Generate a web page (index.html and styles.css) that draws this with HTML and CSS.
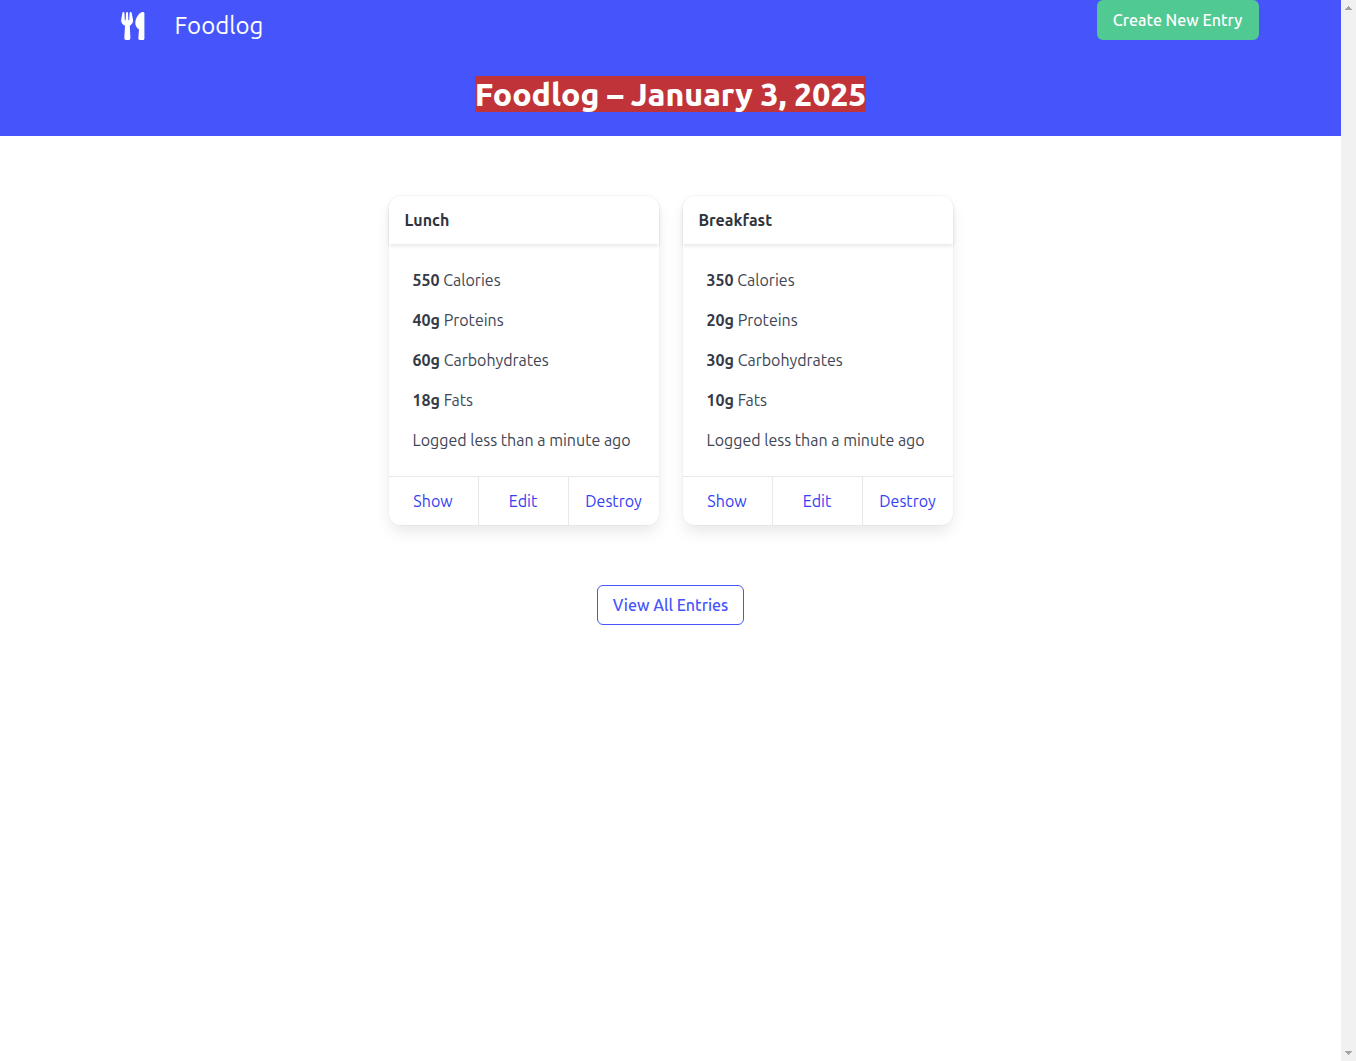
FILE: index.html
```html
<!DOCTYPE html>
<html lang="en">
<head>
<meta charset="utf-8">
<title>Foodlog</title>
<meta name="viewport" content="width=device-width, initial-scale=1">
<link rel="stylesheet" href="styles.css">
</head>
<body>
<div class="page">
  <header class="hero">
    <nav class="navbar" aria-label="Main">
      <a class="brand" href="#">
        <svg class="brand-icon" viewBox="0 0 24 28" aria-hidden="true">
          <path fill="currentColor" d="M1.4 1Q1.5 0 2.4 0T3.4 1L3.8 8.2H4.6L5 .9Q5.1 0 6 0T7 .9L7.4 8.2H8.2L8.6 1Q8.7 0 9.6 0T10.7 1L12 7.8C12.5 10.6 11 12.4 8.8 13.8L9.4 26.3Q9.4 28 7.8 28H5Q3.3 28 3.3 26.3L4 13.8C1.7 12.4-.3 10.6.2 7.8ZM22 0Q23.4 0 23.4 1.4V26.5Q23.4 28 22 28H18.8Q17.2 28 17.3 26.4L18 17.6C15.8 15.8 14.3 13.8 14.3 11.2 14.3 6 18.2.2 22 0Z"/>
        </svg>
        <span class="brand-name">Foodlog</span>
      </a>
      <button class="button button-success" type="button">Create New Entry</button>
    </nav>
    <div class="hero-title">
      <h1 class="title">Foodlog – January 3, 2025</h1>
    </div>
  </header>
  <main class="content">
    <div class="cards">
      <article class="card">
        <h2 class="card-header">Lunch</h2>
        <div class="card-content">
          <p><strong>550</strong> Calories</p>
          <p><strong>40g</strong> Proteins</p>
          <p><strong>60g</strong> Carbohydrates</p>
          <p><strong>18g</strong> Fats</p>
          <p>Logged less than a minute ago</p>
        </div>
        <footer class="card-footer">
          <a href="#">Show</a>
          <a href="#">Edit</a>
          <a href="#">Destroy</a>
        </footer>
      </article>
      <article class="card">
        <h2 class="card-header">Breakfast</h2>
        <div class="card-content">
          <p><strong>350</strong> Calories</p>
          <p><strong>20g</strong> Proteins</p>
          <p><strong>30g</strong> Carbohydrates</p>
          <p><strong>10g</strong> Fats</p>
          <p>Logged less than a minute ago</p>
        </div>
        <footer class="card-footer">
          <a href="#">Show</a>
          <a href="#">Edit</a>
          <a href="#">Destroy</a>
        </footer>
      </article>
    </div>
    <a class="button button-outlined" href="#">View All Entries</a>
  </main>
</div>
<div class="scrollbar" aria-hidden="true">
  <svg class="scroll-arrow" viewBox="0 0 7 4"><path fill="#a3a3a3" d="M3 0h1v1h1v1h1v1h1v1H0V3h1V2h1V1h1z"/></svg>
  <svg class="scroll-arrow" viewBox="0 0 7 4"><path fill="#a3a3a3" d="M0 0h7v1H6v1H5v1H4v1H3V3H2V2H1V1H0z"/></svg>
</div>
</body>
</html>
```
FILE: styles.css
```css
*,
*::before,
*::after {
  box-sizing: border-box;
}

body {
  margin: 0;
  min-height: 100vh;
  display: grid;
  grid-template-columns: 1fr 15px;
  background: #fff;
  color: #404654;
  font-family: Ubuntu, "Open Sans", "Noto Sans", sans-serif;
  font-size: 16px;
  font-weight: 400;
  line-height: 24px;
  text-rendering: optimizeLegibility;
}

h1,
h2,
p {
  margin: 0;
}

a {
  color: #3440f4;
  text-decoration: none;
}

strong {
  color: #353a46;
  font-weight: 600;
}

.hero {
  background: #4655fb;
  padding-bottom: 24px;
}

.navbar {
  display: flex;
  align-items: flex-start;
  justify-content: space-between;
  max-width: 1176px;
  margin: 0 auto;
}

.brand {
  display: flex;
  align-items: center;
  gap: 30px;
  height: 52px;
  padding-left: 38px;
  color: #fff;
}

.brand-icon {
  width: 24px;
  height: 28px;
}

.brand-name {
  font-size: 24px;
  line-height: 36px;
}

.button {
  display: inline-flex;
  align-items: center;
  justify-content: center;
  height: 40px;
  padding: 0 15px;
  border: 1px solid transparent;
  border-radius: 6px;
  font-family: inherit;
  font-size: 16px;
  font-weight: 500;
  line-height: 24px;
  cursor: pointer;
}

.button-success {
  min-width: 162px;
  background: #51c993;
  color: #fff;
}

.button-outlined {
  min-width: 147px;
  border-color: #4655fb;
  color: #4655fb;
}

.hero-title {
  display: flex;
  justify-content: center;
  padding: 24px 24px 0;
}

.title {
  background: #c03439;
  color: #fff;
  font-size: 32px;
  font-weight: 800;
  line-height: 36px;
}

.content {
  display: flex;
  flex-direction: column;
  align-items: center;
  gap: 60px;
  padding: 60px 24px;
}

.cards {
  display: flex;
  flex-wrap: wrap;
  justify-content: center;
  gap: 24px;
}

.card {
  width: 270px;
  border-radius: 12px;
  background: #fff;
  box-shadow: 0 8px 16px -2px rgba(10, 10, 10, 0.1), 0 0 0 1px rgba(10, 10, 10, 0.02);
}

.card-header {
  padding: 12px 16px;
  border-radius: 12px 12px 0 0;
  box-shadow: 0 2px 4px rgba(10, 10, 10, 0.1);
  color: #2e333d;
  font-size: 16px;
  font-weight: 600;
  line-height: 24px;
}

.card-content {
  display: grid;
  gap: 16px;
  padding: 24px;
}

.card-footer {
  display: grid;
  grid-template-columns: repeat(3, 1fr);
  border-top: 1px solid #e8e9ee;
}

.card-footer a {
  padding: 12px;
  border-right: 1px solid #e8e9ee;
  text-align: center;
}

.card-footer a:last-child {
  border-right: 0;
}

.scrollbar {
  position: sticky;
  top: 0;
  height: 100vh;
  display: flex;
  flex-direction: column;
  align-items: center;
  justify-content: space-between;
  padding: 6px 0;
  background: #f1f1f1;
}

.scroll-arrow {
  width: 7px;
  height: 4px;
}
```
